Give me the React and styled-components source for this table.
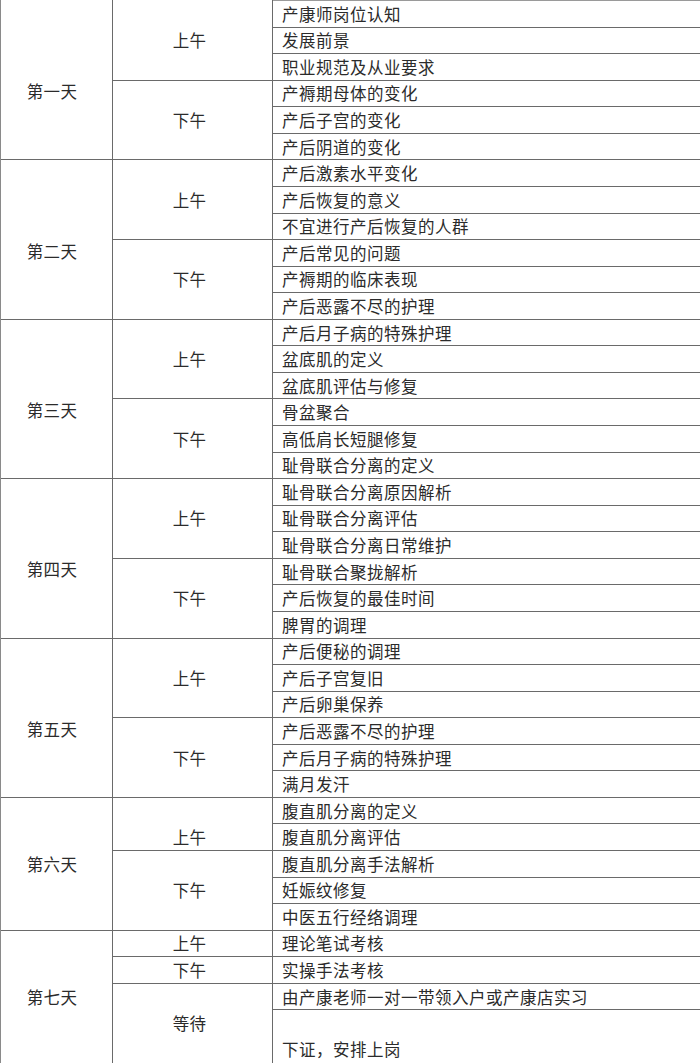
import React from "react"
import styled, { createGlobalStyle } from "styled-components"

const ROW = 26.575
const LINE = "#6a6a6a"

const GlobalStyle = createGlobalStyle`
    html, body {
        margin: 0;
        padding: 0;
        background: #ffffff;
    }
    body {
        font-family: "Noto Sans CJK SC", "Noto Sans", sans-serif;
        color: #2b2b2b;
        -webkit-font-smoothing: antialiased;
    }
`

const Table = styled.div`
    width: 700px;
    height: 1063px;
    overflow: hidden;
    display: flex;
    flex-direction: column;
    border-left: 1px solid #8a8a8a;
    box-sizing: border-box;
`

const DayBlock = styled.div`
    display: grid;
    grid-template-columns: 112px 1fr;
`

const DayLabel = styled.div`
    box-sizing: border-box;
    display: flex;
    align-items: center;
    justify-content: center;
    padding-top: ${(p) => p.offset || 0}px;
    padding-right: 9px;
    font-size: 16.5px;
    letter-spacing: 0.3px;
    border-right: 1px solid ${LINE};
    border-top: ${(p) => (p.first ? "none" : `1px solid ${LINE}`)};
`

const Sessions = styled.div`
    display: flex;
    flex-direction: column;
`

const Session = styled.div`
    display: grid;
    grid-template-columns: 160px 1fr;
`

const SessionLabel = styled.div`
    box-sizing: border-box;
    display: flex;
    align-items: center;
    justify-content: center;
    padding-top: ${(p) => p.offset || 0}px;
    padding-right: 6px;
    font-size: 16.5px;
    letter-spacing: 0.3px;
    border-right: 1px solid ${LINE};
    border-top: ${(p) => (p.first ? "none" : `1px solid ${LINE}`)};
`

const Items = styled.div`
    display: flex;
    flex-direction: column;
`

const Item = styled.div`
    box-sizing: border-box;
    height: ${(p) => (p.tall ? ROW * 2 : ROW)}px;
    display: flex;
    align-items: ${(p) => (p.tall ? "flex-end" : "center")};
    padding: ${(p) => (p.tall ? "0 0 2px 9px" : "0 0 0 9px")};
    font-size: 16.5px;
    letter-spacing: 0.5px;
    white-space: nowrap;
    border-top: 1px solid ${(p) => (p.first ? "#9a9a9a" : LINE)};
`

const days = [
    {
        name: "第一天",
        offset: 22,
        sessions: [
            { name: "上午", items: ["产康师岗位认知", "发展前景", "职业规范及从业要求"] },
            { name: "下午", items: ["产褥期母体的变化", "产后子宫的变化", "产后阴道的变化"] },
        ],
    },
    {
        name: "第二天",
        offset: 22,
        sessions: [
            { name: "上午", items: ["产后激素水平变化", "产后恢复的意义", "不宜进行产后恢复的人群"] },
            { name: "下午", items: ["产后常见的问题", "产褥期的临床表现", "产后恶露不尽的护理"] },
        ],
    },
    {
        name: "第三天",
        offset: 22,
        sessions: [
            { name: "上午", items: ["产后月子病的特殊护理", "盆底肌的定义", "盆底肌评估与修复"] },
            { name: "下午", items: ["骨盆聚合", "高低肩长短腿修复", "耻骨联合分离的定义"] },
        ],
    },
    {
        name: "第四天",
        offset: 22,
        sessions: [
            { name: "上午", items: ["耻骨联合分离原因解析", "耻骨联合分离评估", "耻骨联合分离日常维护"] },
            { name: "下午", items: ["耻骨联合聚拢解析", "产后恢复的最佳时间", "脾胃的调理"] },
        ],
    },
    {
        name: "第五天",
        offset: 22,
        sessions: [
            { name: "上午", items: ["产后便秘的调理", "产后子宫复旧", "产后卵巢保养"] },
            { name: "下午", items: ["产后恶露不尽的护理", "产后月子病的特殊护理", "满月发汗"] },
        ],
    },
    {
        name: "第六天",
        offset: 0,
        sessions: [
            { name: "上午", offset: 27, items: ["腹直肌分离的定义", "腹直肌分离评估"] },
            { name: "下午", items: ["腹直肌分离手法解析", "妊娠纹修复", "中医五行经络调理"] },
        ],
    },
    {
        name: "第七天",
        offset: 0,
        sessions: [
            { name: "上午", items: ["理论笔试考核"] },
            { name: "下午", items: ["实操手法考核"] },
            { name: "等待", items: ["由产康老师一对一带领入户或产康店实习", "下证，安排上岗"], tallLast: true },
        ],
    },
]

export default function App() {
    return (
        <>
            <GlobalStyle />
            <Table>
                {days.map((day, di) => (
                    <DayBlock key={day.name}>
                        <DayLabel first={di === 0} offset={day.offset}>
                            {day.name}
                        </DayLabel>
                        <Sessions>
                            {day.sessions.map((s, si) => (
                                <Session key={s.name}>
                                    <SessionLabel first={di === 0 && si === 0} offset={s.offset}>
                                        {s.name}
                                    </SessionLabel>
                                    <Items>
                                        {s.items.map((text, ii) => (
                                            <Item
                                                key={text}
                                                first={di === 0 && si === 0 && ii === 0}
                                                tall={s.tallLast && ii === s.items.length - 1}
                                            >
                                                {text}
                                            </Item>
                                        ))}
                                    </Items>
                                </Session>
                            ))}
                        </Sessions>
                    </DayBlock>
                ))}
            </Table>
        </>
    )
}
